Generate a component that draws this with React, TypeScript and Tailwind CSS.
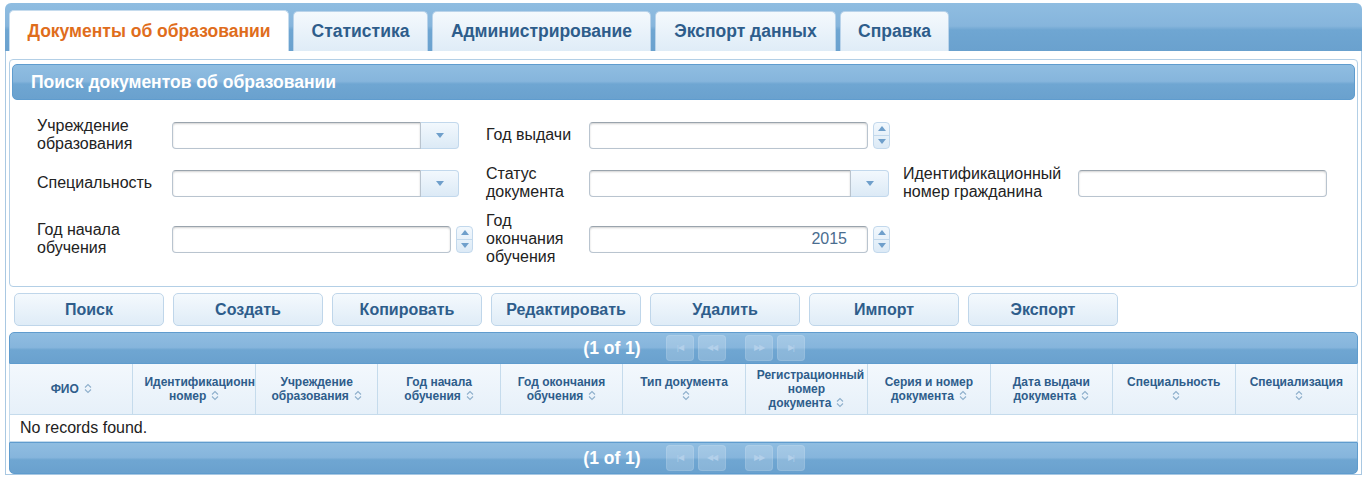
import React from "react";

const headerBg =
  "bg-[linear-gradient(to_bottom,#8fbde1_0%,#86b5dc_48%,#6fa6d2_56%,#6aa1ce_100%)]";

const Caret = () => (
  <svg width="8" height="5" viewBox="0 0 8 5">
    <path d="M0 0h8L4 5z" fill="#6f9fcb" />
  </svg>
);

const SelectField = ({ w }: { w: string }) => (
  <div className={`flex h-[27px] ${w}`}>
    <div className="flex-1 rounded-l-[4px] border border-[#b9c4cf] border-t-[#9aa4ad] bg-white shadow-[inset_0_1px_2px_rgba(0,0,0,0.18)]" />
    <div className="flex w-[38px] items-center justify-center rounded-r-[4px] border border-l-0 border-[#c2d8ec] bg-[linear-gradient(to_bottom,#f2f8fd,#dceaf6)]">
      <Caret />
    </div>
  </div>
);

const Spinner = () => (
  <div className="ml-[5px] flex h-[27px] w-[17px] flex-col overflow-hidden rounded-[4px] border border-[#c2d8ec] bg-[linear-gradient(to_bottom,#f2f8fd,#dceaf6)]">
    <div className="flex flex-1 items-center justify-center border-b border-[#c2d8ec]">
      <svg width="8" height="5" viewBox="0 0 8 5">
        <path d="M0 5h8L4 0z" fill="#6f9fcb" />
      </svg>
    </div>
    <div className="flex flex-1 items-center justify-center">
      <Caret />
    </div>
  </div>
);

const TextField = ({ w, value }: { w: string; value?: string }) => (
  <div
    className={`flex h-[27px] items-center justify-end rounded-[4px] border border-[#b9c4cf] border-t-[#9aa4ad] bg-white pr-[20px] text-[16px] text-[#4a6d8f] shadow-[inset_0_1px_2px_rgba(0,0,0,0.18)] ${w}`}
  >
    {value}
  </div>
);

const SortIcon = () => (
  <svg width="8" height="11" viewBox="0 0 8 11" className="ml-[5px] inline-block align-[-1px]">
    <path d="M1 4.5L4 1.5l3 3M1 6.5l3 3 3-3" fill="none" stroke="#8fb0cc" strokeWidth="1.1" />
  </svg>
);

const PageBtn = ({ icon }: { icon: string }) => (
  <div className="flex h-[26px] w-[28px] items-center justify-center rounded-[4px] border border-white/10 bg-white/20 text-[8px] tracking-[-1px] text-[#b3d0ea]">
    {icon}
  </div>
);

const Paginator = ({ rounded }: { rounded: string }) => (
  <div
    className={`flex h-[32px] items-center justify-center border border-[#5f9cce] pl-[21px] ${headerBg} ${rounded}`}
  >
    <span className="text-[17.5px] font-bold text-white">(1 of 1)</span>
    <div className="ml-[25px] flex gap-[4px]">
      <PageBtn icon="|◀" />
      <PageBtn icon="◀◀" />
    </div>
    <div className="ml-[19px] flex gap-[4px]">
      <PageBtn icon="▶▶" />
      <PageBtn icon="▶|" />
    </div>
  </div>
);

const tabs = ["Статистика", "Администрирование", "Экспорт данных", "Справка"];
const tabWidths = ["w-[135px]", "w-[219px]", "w-[181px]", "w-[109px]"];

const buttons = ["Поиск", "Создать", "Копировать", "Редактировать", "Удалить", "Импорт", "Экспорт"];

const columns = [
  "ФИО",
  "Идентификационный номер",
  "Учреждение образования",
  "Год начала обучения",
  "Год окончания обучения",
  "Тип документа",
  "Регистрационный номер документа",
  "Серия и номер документа",
  "Дата выдачи документа",
  "Специальность",
  "Специализация",
];

export default function App() {
  return (
    <div className="h-[480px] overflow-hidden bg-white pl-[5px] pr-[3px] pt-[3px] font-['Liberation_Sans',Arial,sans-serif]">
      {/* tab bar */}
      <div className={`flex h-[48px] items-end gap-[4px] rounded-t-[6px] pl-[4px] ${headerBg}`}>
        <div className="flex h-[41px] w-[280px] items-center justify-center rounded-t-[5px] border border-b-0 border-[#c6dcee] bg-white text-[17.5px] font-bold text-[#df6d1c]">
          Документы об образовании
        </div>
        {tabs.map((t, i) => (
          <div
            key={t}
            className={`flex h-[40px] items-center justify-center rounded-t-[5px] border border-b-0 border-[#b9d3ea] bg-[linear-gradient(to_bottom,#f4f9fd,#dfecf7)] text-[17.5px] font-bold text-[#2e5d8b] ${tabWidths[i]}`}
          >
            {t}
          </div>
        ))}
      </div>

      <div className="border border-t-0 border-[#a9c8e2] px-[3px] pt-[8px]">
        {/* search panel */}
        <div className="rounded-[4px] border border-[#b3cfe6] px-[2px] pt-[4px] pb-[14px]">
          <div className={`flex h-[36px] items-center rounded-[5px] border border-[#5f9cce] pl-[18px] ${headerBg}`}>
            <span className="text-[17.5px] font-bold text-white">Поиск документов об образовании</span>
          </div>

          <div className="mt-[10px] flex flex-col pl-[25px] text-[16px] leading-[18px] text-[#222]">
            <div className="flex h-[50px] items-center">
              <div className="w-[135px]">
                Учреждение
                <br />
                образования
              </div>
              <SelectField w="w-[287px]" />
              <div className="w-[27px]" />
              <div className="w-[103px]">Год выдачи</div>
              <TextField w="w-[279px]" />
              <Spinner />
            </div>
            <div className="flex h-[46px] items-center">
              <div className="w-[135px]">Специальность</div>
              <SelectField w="w-[287px]" />
              <div className="w-[27px]" />
              <div className="w-[103px]">
                Статус
                <br />
                документа
              </div>
              <SelectField w="w-[300px]" />
              <div className="w-[14px]" />
              <div className="w-[175px]">
                Идентификационный
                <br />
                номер гражданина
              </div>
              <TextField w="w-[249px]" />
            </div>
            <div className="flex h-[66px] items-center">
              <div className="w-[135px]">
                Год начала
                <br />
                обучения
              </div>
              <TextField w="w-[279px]" />
              <Spinner />
              <div className="w-[13px]" />
              <div className="w-[103px]">
                Год
                <br />
                окончания
                <br />
                обучения
              </div>
              <TextField w="w-[279px]" value="2015" />
              <Spinner />
            </div>
          </div>
        </div>

        {/* buttons */}
        <div className="flex gap-[9px] py-[6px] pl-[5px]">
          {buttons.map((b) => (
            <button
              key={b}
              className="h-[33px] w-[150px] rounded-[5px] border border-[#bfd6ea] bg-[linear-gradient(to_bottom,#f4f9fd,#dfecf7)] text-[16px] font-bold text-[#2e5d8b]"
            >
              {b}
            </button>
          ))}
        </div>

        {/* data table */}
        <div>
          <Paginator rounded="rounded-t-[5px]" />
          <div className="grid grid-cols-11 border-x border-[#c5dbec] bg-[linear-gradient(to_bottom,#f3f8fd,#e6f0f9)]">
            {columns.map((c, i) => (
              <div
                key={c}
                className={`flex h-[51px] items-center justify-center overflow-hidden border-b border-[#c5dbec] px-[11px] text-center text-[12px] font-bold leading-[14px] text-[#2e5d8b] ${i > 0 ? "border-l" : ""}`}
              >
                <span className="block w-full">
                  {c}
                  <SortIcon />
                </span>
              </div>
            ))}
          </div>
          <div className="flex h-[27px] items-center border-x border-b border-[#c5dbec] bg-white pl-[10px] text-[16px] text-[#222]">
            No records found.
          </div>
          <Paginator rounded="rounded-b-[5px]" />
        </div>
      </div>
    </div>
  );
}
